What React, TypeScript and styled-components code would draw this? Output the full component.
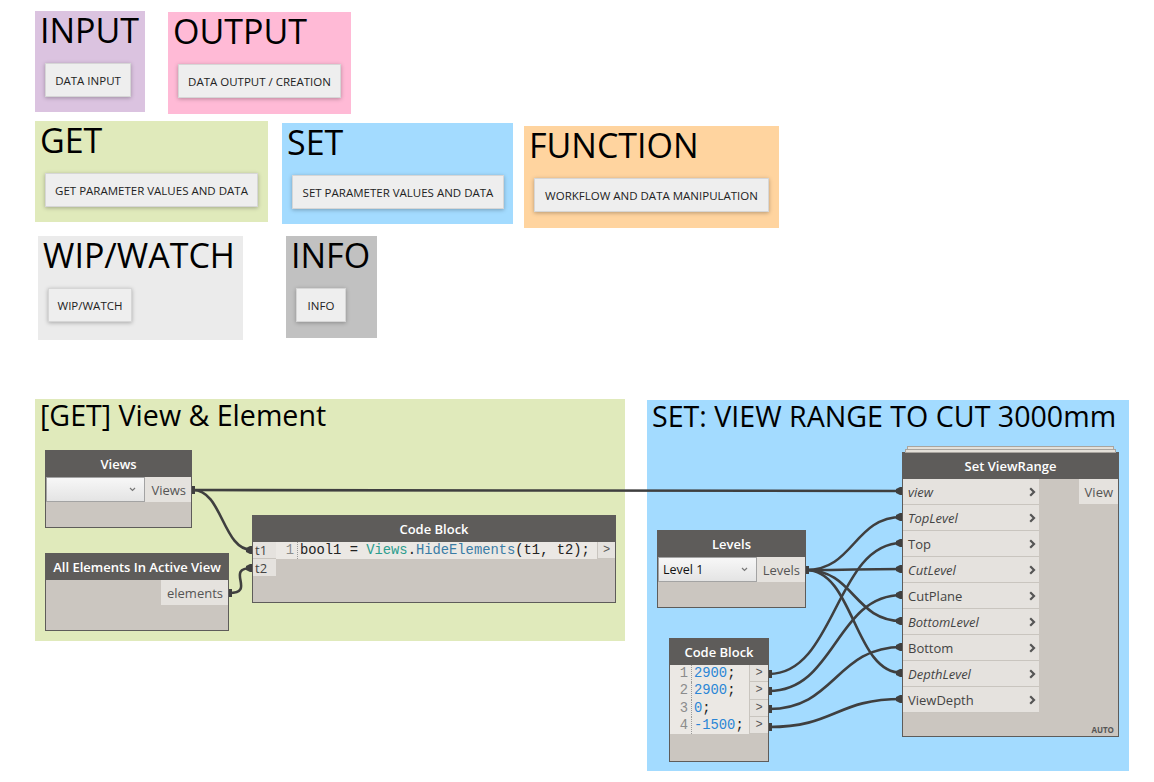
import React from 'react';
import styled, { createGlobalStyle } from 'styled-components';

const GlobalStyle = createGlobalStyle`
  html, body { margin: 0; padding: 0; background: #fff; }
  body { font-family: "Open Sans", "Noto Sans", sans-serif; }
`;

const Canvas = styled.div`
  position: relative;
  width: 1154px;
  height: 782px;
  overflow: hidden;
  background: #fff;
`;

// groups sit on the free canvas at their own coordinates
const Group = styled.div<{ $x: number; $y: number; $w: number; $h: number; $bg: string }>`
  position: absolute;
  left: ${p => p.$x}px;
  top: ${p => p.$y}px;
  width: ${p => p.$w}px;
  height: ${p => p.$h}px;
  background: ${p => p.$bg};
  box-sizing: border-box;
  padding-left: 5px;
  display: flex;
  flex-direction: column;
  align-items: flex-start;
`;

const GroupTitle = styled.div<{ $size: number }>`
  font-size: ${p => p.$size}px;
  line-height: ${p => Math.round(p.$size * 1.18)}px;
  margin-top: -1px;
  color: #000;
  white-space: nowrap;
`;

const LegendButton = styled.div<{ $w: number }>`
  width: ${p => p.$w}px;
  height: 34px;
  margin: 13px 0 0 5px;
  box-sizing: border-box;
  background: #eeeeee;
  border: 1px solid #d6d6d6;
  box-shadow: 0 1px 4px rgba(0, 0, 0, 0.28);
  display: flex;
  align-items: center;
  justify-content: center;
  font-size: 11.5px;
  color: #222;
  white-space: nowrap;
`;

const Node = styled.div<{ $x: number; $y: number; $w: number; $h: number }>`
  position: absolute;
  left: ${p => p.$x}px;
  top: ${p => p.$y}px;
  width: ${p => p.$w}px;
  height: ${p => p.$h}px;
  box-sizing: border-box;
  background: #cbc6c0;
  border: 1px solid #5e5c5a;
  display: flex;
  flex-direction: column;
`;

const StackedNode = styled(Node)`
  &::before,
  &::after {
    content: '';
    position: absolute;
    height: 2px;
    background: #e4e0d9;
    border: 1px solid #a9a59f;
  }
  &::before { top: -7px; left: 4px; right: 4px; }
  &::after { top: -4px; left: 2px; right: 2px; }
`;

const NodeHeader = styled.div`
  height: 26px;
  flex: none;
  background: #5e5c5a;
  color: #fff;
  font-weight: 600;
  font-size: 13px;
  display: flex;
  align-items: center;
  justify-content: center;
  white-space: nowrap;
`;

const NodeBody = styled.div<{ $end?: boolean }>`
  display: flex;
  align-items: flex-start;
  justify-content: ${p => (p.$end ? 'flex-end' : 'flex-start')};
  flex: 1;
`;

const PortOut = styled.div<{ $w: number }>`
  width: ${p => p.$w}px;
  height: 25px;
  box-sizing: border-box;
  background: #e5e2de;
  color: #555;
  font-size: 13px;
  display: flex;
  align-items: center;
  justify-content: flex-end;
  padding-right: 5px;
`;

const Dropdown = styled.div`
  width: 99px;
  height: 25px;
  box-sizing: border-box;
  border: 1px solid #a3a3a3;
  background: linear-gradient(#f7f7f7, #e4e4e4);
  display: flex;
  align-items: center;
  justify-content: space-between;
  padding: 0 8px 0 4px;
  font-size: 12.5px;
  color: #111;
`;

const Chevron = () => (
  <svg width="7" height="5" viewBox="0 0 7 5">
    <path d="M1 1l2.5 2.5L6 1" fill="none" stroke="#777" strokeWidth="1.2" />
  </svg>
);

const Column = styled.div<{ $w: number }>`
  width: ${p => p.$w}px;
  flex: none;
  display: flex;
  flex-direction: column;
`;

const SmallPort = styled.div<{ $h: number; $sep?: boolean }>`
  height: ${p => p.$h}px;
  box-sizing: border-box;
  background: #e5e2de;
  border-bottom: ${p => (p.$sep ? '1px solid #c9c5bf' : 'none')};
  color: #444;
  font-size: 13px;
  display: flex;
  align-items: center;
  padding-left: 2px;
`;

const OutArrow = styled.div<{ $h: number }>`
  height: ${p => p.$h}px;
  box-sizing: border-box;
  background: #e5e2de;
  border-left: 1px solid #c9c5bf;
  border-bottom: 1px solid #c9c5bf;
  color: #555;
  font-family: "Liberation Mono", "DejaVu Sans Mono", monospace;
  font-size: 12px;
  display: flex;
  align-items: center;
  justify-content: center;
`;

const CodeArea = styled.div`
  flex: 1;
  display: flex;
  flex-direction: column;
  background: #ebe8e4;
`;

const CodeLine = styled.div<{ $h: number }>`
  height: ${p => p.$h}px;
  display: flex;
  align-items: center;
  font-family: "Liberation Mono", "DejaVu Sans Mono", monospace;
  font-size: 13.8px;
  color: #222;
  white-space: pre;
`;

const Gutter = styled.span`
  width: 22px;
  height: 100%;
  box-sizing: border-box;
  border-right: 1px dotted #9a9a9a;
  color: #8c8c8c;
  text-align: right;
  padding-right: 3px;
  display: flex;
  align-items: center;
  justify-content: flex-end;
  margin-right: 2px;
`;

const Tok = styled.span<{ $c: string }>`
  color: ${p => p.$c};
`;

const InRow = styled.div<{ $italic?: boolean }>`
  height: 26px;
  box-sizing: border-box;
  background: #e5e2de;
  border-bottom: 1px solid #c9c5bf;
  display: flex;
  align-items: center;
  justify-content: space-between;
  padding: 0 3px 0 5px;
  font-size: 13px;
  font-style: ${p => (p.$italic ? 'italic' : 'normal')};
  color: #444;
`;

const RightPane = styled.div`
  flex: 1;
  display: flex;
  justify-content: flex-end;
`;

const NodeFooter = styled.div`
  height: 22px;
  flex: none;
  display: flex;
  align-items: flex-end;
  justify-content: flex-end;
  padding: 0 4px 6px 0;
  font-size: 8px;
  font-weight: 700;
  color: #555;
`;

const Wires = styled.svg`
  position: absolute;
  left: 0;
  top: 0;
  pointer-events: none;
`;

const Arrow = () => (
  <svg width="7" height="10" viewBox="0 0 7 10">
    <path d="M1.2 1.2L5 5L1.2 8.8" fill="none" stroke="#555" strokeWidth="2.2" />
  </svg>
);

const legend = [
  { t: 'INPUT', b: 'DATA INPUT', x: 35, y: 11, w: 110, h: 101, bw: 86, bg: '#dbc3e0' },
  { t: 'OUTPUT', b: 'DATA OUTPUT / CREATION', x: 168, y: 12, w: 183, h: 102, bw: 163, bg: '#ffbad6' },
  { t: 'GET', b: 'GET PARAMETER VALUES AND DATA', x: 35, y: 121, w: 233, h: 101, bw: 213, bg: '#e0eabb' },
  { t: 'SET', b: 'SET PARAMETER VALUES AND DATA', x: 282, y: 123, w: 231, h: 101, bw: 212, bg: '#a3dbff' },
  { t: 'FUNCTION', b: 'WORKFLOW AND DATA MANIPULATION', x: 524, y: 126, w: 255, h: 102, bw: 235, bg: '#ffd49f' },
  { t: 'WIP/WATCH', b: 'WIP/WATCH', x: 38, y: 236, w: 205, h: 104, bw: 84, bg: '#ebebeb' },
  { t: 'INFO', b: 'INFO', x: 286, y: 236, w: 91, h: 102, bw: 50, bg: '#c1c1c1' },
];

const viewRangeInputs = [
  { n: 'view', i: true },
  { n: 'TopLevel', i: true },
  { n: 'Top' },
  { n: 'CutLevel', i: true },
  { n: 'CutPlane' },
  { n: 'BottomLevel', i: true },
  { n: 'Bottom' },
  { n: 'DepthLevel', i: true },
  { n: 'ViewDepth' },
];

const codeLines = ['2900', '2900', '0', '-1500'];

// [from x, from y, to x, to y]
const links: number[][] = [
  [193, 490, 902, 491],
  [193, 490, 252, 550],
  [229, 593, 252, 568],
  [806, 570, 902, 517],
  [806, 570, 902, 569],
  [806, 570, 902, 621],
  [806, 570, 902, 673],
  [769, 674, 902, 543],
  [769, 691, 902, 595],
  [769, 709, 902, 647],
  [769, 727, 902, 699],
];

const wirePath = ([x1, y1, x2, y2]: number[]) => {
  const k = Math.max(28, (x2 - x1) * 0.5);
  return `M${x1} ${y1} C${x1 + k} ${y1} ${x2 - k} ${y2} ${x2} ${y2}`;
};

const App = () => {
  return (
    <>
      <GlobalStyle />
      <Canvas>
        {legend.map(g => (
          <Group key={g.t} $x={g.x} $y={g.y} $w={g.w} $h={g.h} $bg={g.bg}>
            <GroupTitle $size={34}>{g.t}</GroupTitle>
            <LegendButton $w={g.bw}>{g.b}</LegendButton>
          </Group>
        ))}

        <Group $x={35} $y={399} $w={590} $h={242} $bg="#e0eabb">
          <GroupTitle $size={28.6}>[GET] View &amp; Element</GroupTitle>
        </Group>
        <Group $x={647} $y={400} $w={482} $h={371} $bg="#a3dbff">
          <GroupTitle $size={28.6}>SET: VIEW RANGE TO CUT 3000mm</GroupTitle>
        </Group>

        <Wires width={1154} height={782}>
          {links.map((l, i) => (
            <path key={i} d={wirePath(l)} fill="none" stroke="#3f3f3f" strokeWidth={2.6} />
          ))}
          {links.map((l, i) => (
            <path
              key={'n' + i}
              d={`M${l[2] - 6} ${l[3] - 2} L${l[2] - 2} ${l[3] - 4} L${l[2]} ${l[3] - 4} L${l[2]} ${l[3] + 4} L${l[2] - 2} ${l[3] + 4} L${l[2] - 6} ${l[3] + 2} Z`}
              fill="#3f3f3f"
            />
          ))}
          {[[191, 490], [228, 593], [805, 570], [768, 674], [768, 691], [768, 709], [768, 727]].map(([x, y], i) => (
            <rect key={'o' + i} x={x} y={y - 4} width={4} height={8} fill="#3f3f3f" />
          ))}
        </Wires>

        <Node $x={45} $y={450} $w={147} $h={78}>
          <NodeHeader>Views</NodeHeader>
          <NodeBody>
            <Dropdown>
              <span />
              <Chevron />
            </Dropdown>
            <PortOut $w={46}>Views</PortOut>
          </NodeBody>
        </Node>

        <Node $x={45} $y={553} $w={184} $h={78}>
          <NodeHeader>All Elements In Active View</NodeHeader>
          <NodeBody $end>
            <PortOut $w={67}>elements</PortOut>
          </NodeBody>
        </Node>

        <Node $x={252} $y={515} $w={364} $h={88}>
          <NodeHeader>Code Block</NodeHeader>
          <NodeBody>
            <Column $w={23}>
              <SmallPort $h={17} $sep>t1</SmallPort>
              <SmallPort $h={17}>t2</SmallPort>
            </Column>
            <CodeArea>
              <CodeLine $h={17}>
                <Gutter>1</Gutter>
                bool1 = <Tok $c="#2c9d8e">Views</Tok>.<Tok $c="#3a7ca5">HideElements</Tok>(t1, t2);
              </CodeLine>
            </CodeArea>
            <Column $w={18}>
              <OutArrow $h={17}>&gt;</OutArrow>
            </Column>
          </NodeBody>
        </Node>

        <Node $x={657} $y={530} $w={149} $h={78}>
          <NodeHeader>Levels</NodeHeader>
          <NodeBody>
            <Dropdown>
              <span>Level 1</span>
              <Chevron />
            </Dropdown>
            <PortOut $w={48}>Levels</PortOut>
          </NodeBody>
        </Node>

        <Node $x={669} $y={638} $w={100} $h={124}>
          <NodeHeader>Code Block</NodeHeader>
          <NodeBody>
            <CodeArea>
              {codeLines.map((c, i) => (
                <CodeLine key={i} $h={17.3}>
                  <Gutter>{i + 1}</Gutter>
                  <Tok $c="#2a86d6">{c}</Tok>;
                </CodeLine>
              ))}
            </CodeArea>
            <Column $w={19}>
              {codeLines.map((c, i) => (
                <OutArrow key={i} $h={17.3}>&gt;</OutArrow>
              ))}
            </Column>
          </NodeBody>
        </Node>

        <StackedNode $x={902} $y={452} $w={217} $h={285}>
          <NodeHeader>Set ViewRange</NodeHeader>
          <NodeBody>
            <Column $w={136}>
              {viewRangeInputs.map(r => (
                <InRow key={r.n} $italic={r.i}>
                  {r.n}
                  <Arrow />
                </InRow>
              ))}
            </Column>
            <RightPane>
              <PortOut $w={39}>View</PortOut>
            </RightPane>
          </NodeBody>
          <NodeFooter>AUTO</NodeFooter>
        </StackedNode>
      </Canvas>
    </>
  );
};

export default App;
